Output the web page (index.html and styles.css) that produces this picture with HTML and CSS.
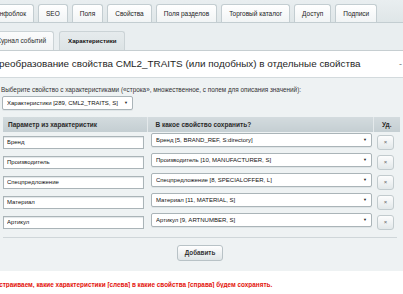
FILE: index.html
```html
<!DOCTYPE html>
<html lang="ru">
<head>
  <meta charset="UTF-8">
  <title>Характеристики</title>
  <link rel="stylesheet" href="styles.css">
</head>
<body>

  <div class="page">
    <div class="tabs">
      <div class="tab">Инфоблок</div>
      <div class="tab">SEO</div>
      <div class="tab">Поля</div>
      <div class="tab">Свойства</div>
      <div class="tab">Поля разделов</div>
      <div class="tab">Торговый каталог</div>
      <div class="tab">Доступ</div>
      <div class="tab">Подписи</div>
    </div>

    <div class="subtabs">
      <div class="subtab">Журнал событий</div>
      <div class="subtab active">Характеристики</div>
    </div>

    <div class="title">
      <span>Преобразование свойства CML2_TRAITS (или подобных) в отдельные свойства</span>
      <span class="toggle">-</span>
    </div>

    <div class="body">
      <p class="label">Выберите свойство с характеристиками («строка», множественное, с полем для описания значений):</p>
      <div class="main-sel">
        <span class="sel">
          <select><option>Характеристики [289, CML2_TRAITS, S]</option></select>
        </span>
      </div>

      <table class="traits">
        <colgroup>
          <col class="c1">
          <col class="c2">
          <col class="c3">
        </colgroup>
        <tr>
          <th>Параметр из характеристик</th>
          <th>В какое свойство сохранить?</th>
          <th class="center">Уд.</th>
        </tr>
        <tr>
          <td><input type="text" value="Бренд"></td>
          <td><span class="sel"><select><option>Бренд [5, BRAND_REF, S:directory]</option></select></span></td>
          <td><button class="del">×</button></td>
        </tr>
        <tr>
          <td><input type="text" value="Производитель"></td>
          <td><span class="sel"><select><option>Производитель [10, MANUFACTURER, S]</option></select></span></td>
          <td><button class="del">×</button></td>
        </tr>
        <tr>
          <td><input type="text" value="Спецпредложение"></td>
          <td><span class="sel"><select><option>Спецпредложение [8, SPECIALOFFER, L]</option></select></span></td>
          <td><button class="del">×</button></td>
        </tr>
        <tr>
          <td><input type="text" value="Материал"></td>
          <td><span class="sel"><select><option>Материал [11, MATERIAL, S]</option></select></span></td>
          <td><button class="del">×</button></td>
        </tr>
        <tr>
          <td><input type="text" value="Артикул"></td>
          <td><span class="sel"><select><option>Артикул [9, ARTNUMBER, S]</option></select></span></td>
          <td><button class="del">×</button></td>
        </tr>
      </table>

      <div class="add-row">
        <button class="btn">Добавить</button>
      </div>
    </div>

    <p class="note">Настраиваем, какие характеристики [слева] в какие свойства [справа] будем сохранять.</p>
  </div>

</body>
</html>
```

FILE: styles.css
```css
body {
  margin: 0;
  background: #fff;
  font-family: "Liberation Sans", Arial, sans-serif;
  color: #333;
  overflow: hidden;
}
.page {
  margin-left: -13px;
  width: 416px;
}

/* верхние вкладки */
.tabs {
  display: flex;
  gap: 4px;
  padding: 4px 0 0 0;
  height: 18px;
  background: linear-gradient(#e9eef0, #dfe6e8);
  border-bottom: 1px solid #c3cdd1;
  overflow: hidden;
}
.tab {
  flex-shrink: 0;
  box-sizing: border-box;
  height: 18px;
  padding: 0 7px;
  line-height: 17px;
  font-size: 6.5px;
  white-space: nowrap;
  color: #222;
  background: linear-gradient(#ffffff, #f1f4f5);
  border: 1px solid #c3cdd1;
  border-bottom: none;
  border-radius: 3px 3px 0 0;
}

.subtabs {
  display: flex;
  gap: 5px;
  padding: 8px 0 0 0;
  height: 19px;
  background: #e9eef0;
  border-bottom: 1px solid #c6ced1;
}
.subtab {
  flex-shrink: 0;
  box-sizing: border-box;
  height: 19px;
  padding: 0 7px;
  line-height: 18px;
  font-size: 6.5px;
  white-space: nowrap;
  color: #2c2c2c;
  background: linear-gradient(#fbfcfc, #f0f3f4);
  border: 1px solid #cbd3d6;
  border-bottom: none;
  border-radius: 3px 3px 0 0;
}
.subtab.active {
  padding: 0 8px;
  font-weight: bold;
  font-size: 6.1px;
  background: linear-gradient(#e6ebed, #dce3e5);
  color: #111;
}

.title {
  display: flex;
  justify-content: space-between;
  height: 26px;
  line-height: 26px;
  padding: 0 0 0 5px;
  font-size: 9.9px;
  white-space: nowrap;
  color: #1e1e1e;
  background: #fff;
  border-bottom: 1px solid #d3dadd;
}
.toggle {
  color: #777;
  font-size: 9px;
  padding-right: 1px;
}

.body {
  background: #eef2f3;
  padding: 7px 6px 10px 14px;
}
.label {
  margin: 0;
  font-size: 6.35px;
  color: #333;
  line-height: 9px;
  white-space: nowrap;
}

.sel {
  position: relative;
  display: inline-block;
  vertical-align: top;
}
.sel select {
  appearance: none;
  box-sizing: border-box;
  display: block;
  height: 14px;
  padding: 0 10px 0 4px;
  font-family: inherit;
  font-size: 6px;
  color: #111;
  background: #fff;
  border: 1px solid #aab4b8;
  border-radius: 2px;
  box-shadow: 0 1px 0 #dfe5e7;
}
.sel::after {
  content: "▼";
  position: absolute;
  right: 5px;
  top: 5px;
  font-size: 4px;
  line-height: 4px;
  color: #222;
}
.main-sel {
  margin: 2px 0 0 1px;
  height: 14px;
}
.main-sel select {
  width: 131px;
}

.traits {
  border-collapse: collapse;
  table-layout: fixed;
  width: 397px;
  margin: 7px 0 0 2px;
}
.traits .c1 { width: 144px; }
.traits .c2 { width: 226px; }
.traits th {
  height: 15px;
  padding: 0 0 0 5px;
  font-size: 6.5px;
  color: #2a2a2a;
  text-align: left;
  white-space: nowrap;
  background: linear-gradient(#d3dbde, #c4ced2);
  border-left: 1px solid #e4e9eb;
}
.traits th:first-child { border-left: none; }
.traits th:nth-child(2) { padding-left: 8px; }
.traits th.center { padding: 0; text-align: center; }
.traits td {
  height: 20px;
  padding: 0;
  vertical-align: middle;
}
.traits td:nth-child(2),
.traits td:nth-child(3) { padding-left: 4px; }
.traits input {
  box-sizing: border-box;
  display: block;
  width: 141px;
  height: 13px;
  padding: 0 3px;
  font-family: inherit;
  font-size: 6px;
  color: #111;
  background: #fff;
  border: 1px solid #aab4b8;
  box-shadow: inset 0 1px 1px #e2e6e8;
}
.traits .sel select {
  width: 221px;
}
.del {
  display: block;
  box-sizing: border-box;
  width: 17px;
  height: 15px;
  padding: 0;
  font-size: 6px;
  color: #666;
  background: linear-gradient(#fdfdfd, #e2e8ea);
  border: 1px solid #c2cbce;
  border-radius: 3px;
}

.add-row {
  margin: 5px 0 0 2px;
  border-top: 1px solid #cfd6d9;
  padding-top: 3px;
  width: 394px;
  text-align: center;
}
.btn {
  height: 16px;
  padding: 0 7px;
  font-family: inherit;
  font-size: 6.3px;
  font-weight: bold;
  color: #333;
  background: linear-gradient(#ffffff, #dfe5e7);
  border: 1px solid #b8c2c6;
  border-radius: 3px;
}

.note {
  margin: 10px 0 0 4px;
  font-size: 6.4px;
  font-weight: bold;
  white-space: nowrap;
  color: #e3120b;
}
```
